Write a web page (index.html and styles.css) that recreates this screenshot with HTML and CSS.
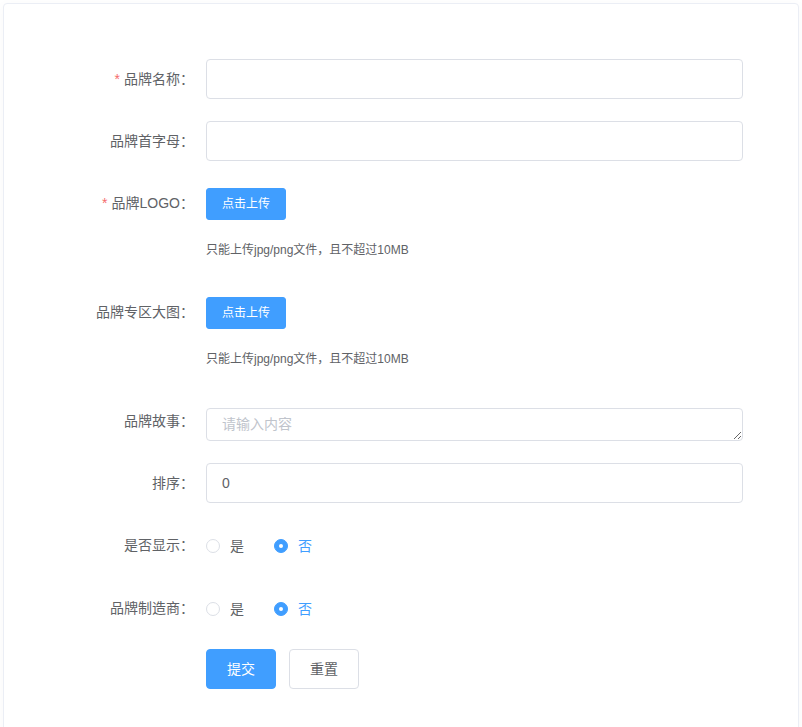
FILE: index.html
```html
<!DOCTYPE html>
<html>

<head>
  <title>添加品牌</title>
  <link rel="stylesheet" href="styles.css">
</head>

<body>
  <div class="card">
    <form class="brand-form">
      <div class="form-item">
        <label class="form-label is-required">品牌名称：</label>
        <div class="form-content">
          <input type="text" class="form-input">
        </div>
      </div>

      <div class="form-item">
        <label class="form-label">品牌首字母：</label>
        <div class="form-content">
          <input type="text" class="form-input">
        </div>
      </div>

      <div class="form-item">
        <label class="form-label is-required">品牌LOGO：</label>
        <div class="form-content">
          <div class="upload">
            <button type="button" class="button button-small button-primary">点击上传</button>
          </div>
          <div class="upload-tip">只能上传jpg/png文件，且不超过10MB</div>
        </div>
      </div>

      <div class="form-item">
        <label class="form-label">品牌专区大图：</label>
        <div class="form-content">
          <div class="upload">
            <button type="button" class="button button-small button-primary">点击上传</button>
          </div>
          <div class="upload-tip">只能上传jpg/png文件，且不超过10MB</div>
        </div>
      </div>

      <div class="form-item">
        <label class="form-label">品牌故事：</label>
        <div class="form-content">
          <textarea class="form-textarea" rows="1" placeholder="请输入内容"></textarea>
        </div>
      </div>

      <div class="form-item">
        <label class="form-label">排序：</label>
        <div class="form-content">
          <input type="text" class="form-input" value="0">
        </div>
      </div>

      <div class="form-item form-item-radio">
        <label class="form-label">是否显示：</label>
        <div class="form-content">
          <div class="radio-group">
            <label class="radio"><span class="radio-inner"></span><span class="radio-label">是</span></label>
            <label class="radio is-checked"><span class="radio-inner"></span><span class="radio-label">否</span></label>
          </div>
        </div>
      </div>

      <div class="form-item form-item-radio form-item-last-radio">
        <label class="form-label">品牌制造商：</label>
        <div class="form-content">
          <div class="radio-group">
            <label class="radio"><span class="radio-inner"></span><span class="radio-label">是</span></label>
            <label class="radio is-checked"><span class="radio-inner"></span><span class="radio-label">否</span></label>
          </div>
        </div>
      </div>

      <div class="form-item">
        <label class="form-label"></label>
        <div class="form-content">
          <button type="button" class="button button-primary">提交</button>
          <button type="button" class="button">重置</button>
        </div>
      </div>
    </form>
  </div>
</body>

</html>
```

FILE: styles.css
```css
body {
  margin: 0;
  background-color: #fff;
  font-family: "Liberation Sans", "Noto Sans CJK SC", sans-serif;
  font-size: 14px;
  color: #606266;
}

.card {
  margin: 3px 3px 0;
  min-height: 760px;
  background-color: #fff;
  border: 1px solid #ebeef5;
  border-radius: 4px;
  box-shadow: 0 2px 12px 0 rgba(0, 0, 0, 0.03);
  padding-top: 55px;
  box-sizing: border-box;
}

.brand-form {
  width: 657px;
  margin-left: 82px;
}

.form-item {
  display: flex;
  margin-bottom: 22px;
}

.form-label {
  flex: none;
  width: 120px;
  padding-right: 12px;
  box-sizing: border-box;
  height: 40px;
  line-height: 41px;
  text-align: right;
  color: #606266;
}

.form-label.is-required::before {
  content: "*";
  color: #f56c6c;
  margin-right: 4px;
}

.form-content {
  flex: 1;
  min-width: 0;
  line-height: 40px;
}

.form-input {
  display: block;
  width: 100%;
  height: 40px;
  box-sizing: border-box;
  padding: 0 15px;
  border: 1px solid #dcdfe6;
  border-radius: 4px;
  font-family: inherit;
  font-size: 14px;
  color: #606266;
  outline: none;
}

.form-textarea {
  display: block;
  width: 100%;
  height: 33px;
  margin-top: 7px;
  box-sizing: border-box;
  padding: 5px 15px;
  line-height: 21px;
  border: 1px solid #dcdfe6;
  border-radius: 4px;
  font-family: inherit;
  font-size: 14px;
  color: #606266;
  resize: vertical;
  outline: none;
}

.form-textarea::placeholder {
  color: #c0c4cc;
}

.upload {
  height: 40px;
}

.upload .button {
  margin-top: 5px;
  vertical-align: top;
}

.upload-tip {
  margin-top: 7px;
  font-size: 12px;
  line-height: 40px;
  color: #606266;
}

.button {
  height: 40px;
  padding: 0 20px;
  border: 1px solid #dcdfe6;
  border-radius: 4px;
  background-color: #fff;
  color: #606266;
  font-family: inherit;
  font-size: 14px;
  line-height: 1;
  cursor: pointer;
  vertical-align: top;
}

.button + .button {
  margin-left: 9px;
}

.button-primary {
  background-color: #409eff;
  border-color: #409eff;
  color: #fff;
}

.button-small {
  height: 32px;
  padding: 0 15px;
  font-size: 12px;
  border-radius: 3px;
}

.form-item-radio .form-content,
.form-item-radio .form-label {
  height: 41px;
  line-height: 41px;
}

.form-item-last-radio {
  margin-bottom: 20px;
}

.radio-group {
  display: flex;
  align-items: center;
  height: 41px;
  padding-top: 1px;
  box-sizing: border-box;
}

.radio {
  display: flex;
  align-items: center;
  margin-right: 30px;
  line-height: 1;
  cursor: pointer;
}

.radio-inner {
  position: relative;
  width: 14px;
  height: 14px;
  box-sizing: border-box;
  border: 1px solid #dcdfe6;
  border-radius: 50%;
  background-color: #fff;
}

.radio-label {
  padding-left: 10px;
  color: #606266;
}

.radio.is-checked .radio-inner {
  background-color: #409eff;
  border-color: #409eff;
}

.radio.is-checked .radio-inner::after {
  content: "";
  position: absolute;
  left: 50%;
  top: 50%;
  width: 4px;
  height: 4px;
  margin: -2px 0 0 -2px;
  border-radius: 50%;
  background-color: #fff;
}

.radio.is-checked .radio-label {
  color: #409eff;
}
```
